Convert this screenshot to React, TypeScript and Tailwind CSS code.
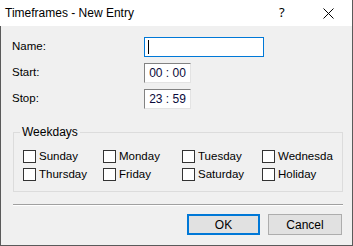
import React from 'react';

const DAYS = ['Sunday', 'Monday', 'Tuesday', 'Wednesda', 'Thursday', 'Friday', 'Saturday', 'Holiday'];

function TimeBox({ value }: { value: string }) {
  return (
    <div className="w-[47px] h-[20px] bg-white border border-t-[#828282] border-l-[#828282] border-r-[#e3e3e3] border-b-[#e3e3e3] flex items-center justify-center text-[12px] text-[#0a0a3a]">
      {value}
    </div>
  );
}

function Check({ label }: { label: string }) {
  return (
    <div className="flex items-center h-[13px] gap-[3px]">
      <div className="w-[13px] h-[13px] bg-white border border-[#333333] shrink-0" />
      <span className="text-[11.5px] leading-none whitespace-nowrap">{label}</span>
    </div>
  );
}

export default function App() {
  return (
    <div className="w-[353px] h-[246px] flex flex-col text-black" style={{ fontFamily: '"Liberation Sans", Arial, sans-serif' }}>
      {/* Title bar */}
      <div className="h-[26px] bg-white border-r border-[#5a5a5a] flex items-center shrink-0">
        <span className="pl-[5px] text-[12px] flex-1">Timeframes - New Entry</span>
        <span className="text-[13px] w-[14px] mr-[30px]" style={{ fontFamily: '"Noto Sans", sans-serif' }}>?</span>
        <svg width="11" height="11" viewBox="0 0 11 11" className="mr-[18px]">
          <path d="M0.5 0.5 L10.5 10.5 M10.5 0.5 L0.5 10.5" stroke="#000" strokeWidth="1" />
        </svg>
      </div>

      {/* Body */}
      <div className="flex-1 bg-[#f0f0f0] border-l border-r border-b border-[#5a5a5a] pt-[11px] pl-[11px] pr-[10px] text-[11.5px]">
        <div className="grid grid-cols-[132px_auto] gap-y-[6px] items-center">
          <span>Name:</span>
          <div className="w-[120px] h-[20px] bg-white border border-[#0078d7] flex items-center pl-[3px]">
            <div className="w-px h-[14px] bg-black" />
          </div>
          <span>Start:</span>
          <TimeBox value="00 : 00" />
          <span>Stop:</span>
          <TimeBox value="23 : 59" />
        </div>

        <fieldset className="mt-[16px] ml-[1px] w-[330px] h-[67px] border border-[#dcdcdc] pl-[9px] pt-[11px]">
          <legend className="text-[12px] px-[2px] -ml-[3px] leading-[14px]">Weekdays</legend>
          <div className="grid grid-cols-[80px_79px_80px_auto] gap-y-[5px]">
            {DAYS.map((d) => (
              <Check key={d} label={d} />
            ))}
          </div>
        </fieldset>

        <div className="mt-[12px] ml-[1px] w-[330px] border-t border-t-[#a0a0a0] border-b border-b-white" />

        <div className="flex justify-end gap-[8px] mt-[8px]">
          <button className="w-[73px] h-[21px] bg-[#e1e1e1] border-2 border-[#0078d7] text-[12px]">OK</button>
          <button className="w-[74px] h-[21px] bg-[#e1e1e1] border border-[#adadad] text-[12px]">Cancel</button>
        </div>
      </div>
    </div>
  );
}
